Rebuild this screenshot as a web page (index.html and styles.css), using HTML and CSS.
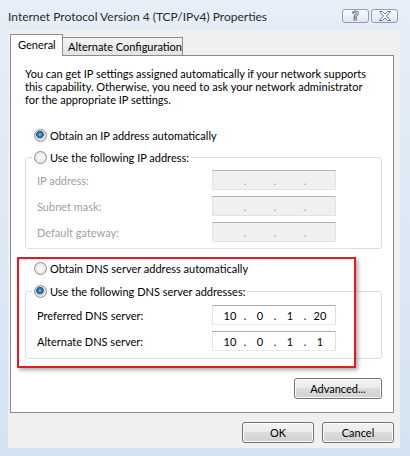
FILE: index.html
```html
<html>
<head>
<title>Internet Protocol Version 4 (TCP/IPv4) Properties</title>
<link rel="stylesheet" href="styles.css">
</head>
<body>
<div class="window">
  <div class="titlebar">
    <span class="title">Internet Protocol Version 4 (TCP/IPv4) Properties</span>
    <div class="caption-buttons">
      <span class="cap-btn"><span class="cap-help">?</span></span>
      <span class="cap-btn">
        <svg width="14" height="10" viewBox="0 0 14 10"><path d="M1.5 0.5h3l2.5 2.6 2.5-2.6h3l-4 4.5 4 4.5h-3l-2.5-2.6-2.5 2.6h-3l4-4.5z" fill="#fff" stroke="#6d7a8a" stroke-width="1" stroke-linejoin="round"/></svg>
      </span>
    </div>
  </div>

  <div class="client">
    <div class="tabs">
      <span class="tab selected">General</span>
      <span class="tab">Alternate Configuration</span>
    </div>

    <div class="panel">
      <p class="intro">You can get IP settings assigned automatically if your network supports<br>
      this capability. Otherwise, you need to ask your network administrator<br>
      for the appropriate IP settings.</p>

      <div class="option first"><span class="radio checked"></span>Obtain an IP address automatically</div>

      <fieldset class="group ip-group disabled">
        <legend class="option"><span class="radio"></span>Use the following IP address:</legend>
        <div class="field first"><span class="label">IP address:</span>
          <span class="ipbox"><span class="oct"></span><span class="dot">.</span><span class="oct"></span><span class="dot">.</span><span class="oct"></span><span class="dot">.</span><span class="oct"></span></span>
        </div>
        <div class="field"><span class="label">Subnet mask:</span>
          <span class="ipbox"><span class="oct"></span><span class="dot">.</span><span class="oct"></span><span class="dot">.</span><span class="oct"></span><span class="dot">.</span><span class="oct"></span></span>
        </div>
        <div class="field"><span class="label">Default gateway:</span>
          <span class="ipbox"><span class="oct"></span><span class="dot">.</span><span class="oct"></span><span class="dot">.</span><span class="oct"></span><span class="dot">.</span><span class="oct"></span></span>
        </div>
      </fieldset>

      <div class="option dns-auto"><span class="radio"></span>Obtain DNS server address automatically</div>

      <fieldset class="group dns-group">
        <legend class="option"><span class="radio checked"></span>Use the following DNS server addresses:</legend>
        <div class="field first"><span class="label">Preferred DNS server:</span>
          <span class="ipbox"><span class="oct">10</span><span class="dot">.</span><span class="oct">0</span><span class="dot">.</span><span class="oct">1</span><span class="dot">.</span><span class="oct">20</span></span>
        </div>
        <div class="field"><span class="label">Alternate DNS server:</span>
          <span class="ipbox"><span class="oct">10</span><span class="dot">.</span><span class="oct">0</span><span class="dot">.</span><span class="oct">1</span><span class="dot">.</span><span class="oct">1</span></span>
        </div>
      </fieldset>

      <div class="panel-foot"><button class="btn advanced">Advanced...</button></div>

      <!-- red annotation drawn over the DNS part -->
      <div class="callout"></div>
    </div>

    <div class="footer">
      <button class="btn">OK</button>
      <button class="btn">Cancel</button>
    </div>
  </div>
</div>
</body>
</html>
```

FILE: styles.css
```css
body { margin:0; font-family:Lato, "Noto Sans", sans-serif; font-size:11px; color:#000; }

.window { width:410px; height:456px; box-sizing:border-box; display:flex; flex-direction:column;
  background:linear-gradient(#e6eef7, #d4e2f1); white-space:nowrap; }

.titlebar { height:30px; box-sizing:border-box; padding:2px 12px 0 8px; display:flex; align-items:center; }
.title { flex:1; font-size:12px; color:#2b2b2b; }
.caption-buttons { display:flex; gap:2px; }
.cap-btn { width:27px; height:14px; box-sizing:border-box; border:1px solid #8d9fb5; border-radius:3px;
  background:linear-gradient(#fbfcfe, #dce6f2); display:flex; align-items:center; justify-content:center; }
.cap-help { font-family:"DejaVu Sans", sans-serif; font-weight:bold; font-size:12px; line-height:12px;
  color:#fff; -webkit-text-stroke:1px #6d7a8a; }

.client { flex:1; margin:0 10px 8px 8px; padding:4px 6px 0 2px; background:#f0f0f0; }

.tabs { display:flex; align-items:flex-end; height:21px; position:relative; z-index:1; }
.tab { box-sizing:border-box; height:18px; width:121px; padding-left:5px; line-height:17px;
  border:1px solid #898c95; border-bottom:none; margin-left:-1px;
  background:linear-gradient(#f3f3f3, #e4e4e4); }
.tab.selected { width:53px; height:22px; margin-left:0; margin-bottom:-1px; padding-left:7px; line-height:19px;
  background:#fff; position:relative; z-index:2; }

.panel { position:relative; border:1px solid #898c95; background:#fff; padding:11px 11px 13px 14px; }

.intro { margin:0; line-height:13px; }

.option { display:flex; align-items:center; height:17px; }
.option.first { margin-top:21px; padding-left:9px; }
.option.dns-auto { margin-top:11px; padding-left:9px; }

.radio { width:13px; height:13px; box-sizing:border-box; border-radius:50%; margin-right:3px;
  border:1px solid #8e8f8f;
  background:radial-gradient(circle, #fdfdfd 0, #ececec 55%, #d2d2d2 100%); }
.radio.checked { background:radial-gradient(circle at 45% 42%, #9fd0f0 0, #3b86c6 1.5px, #1c5693 3.5px, #d8d8d8 4px, #f6f6f6 100%); }

.group { margin:0; border:1px solid #d5dfe5; border-radius:3px; padding:0 0 6px 6px; }
.ip-group { margin-top:5px; }
.dns-group { margin-top:6px; padding-bottom:7px; }
.group legend { padding:0 2px; }

.field { display:flex; align-items:center; height:20px; margin-top:6px; padding-left:5px; }
.field.first { margin-top:4px; }
.dns-group .field.first { margin-top:5px; }
.label { width:175px; }

.ipbox { display:flex; align-items:center; width:124px; height:20px; box-sizing:border-box; padding-left:5px;
  border:1px solid; border-color:#abadb3 #dbdfe6 #e3e9ef #e2e3ea; background:#fff; }
.oct { width:24px; text-align:center; }
.dot { width:6px; text-align:center; }

.disabled .label, .disabled .dot { color:#a0a0a0; }
.disabled .ipbox { background:#f0f0f0; border-color:#adb2b5 #e3e3e3 #e3e3e3 #e3e3e3; }

.panel-foot { display:flex; justify-content:flex-end; margin-top:19px; }

.btn { height:21px; width:72px; box-sizing:border-box; padding:0; font:inherit; color:#000;
  border:1px solid #707070; border-radius:3px;
  background:linear-gradient(#f2f2f2 0, #ebebeb 45%, #dddddd 50%, #cfcfcf 100%);
  box-shadow:inset 0 0 0 1px #fcfcfc; }
.btn.advanced { width:88px; }

.footer { display:flex; justify-content:flex-end; gap:8px; margin-top:9px; }

.callout { position:absolute; left:6px; top:201px; width:339px; height:111px; box-sizing:border-box;
  border:2px solid #e31b23; box-shadow:2px 2px 4px rgba(0,0,0,0.35); }
```
